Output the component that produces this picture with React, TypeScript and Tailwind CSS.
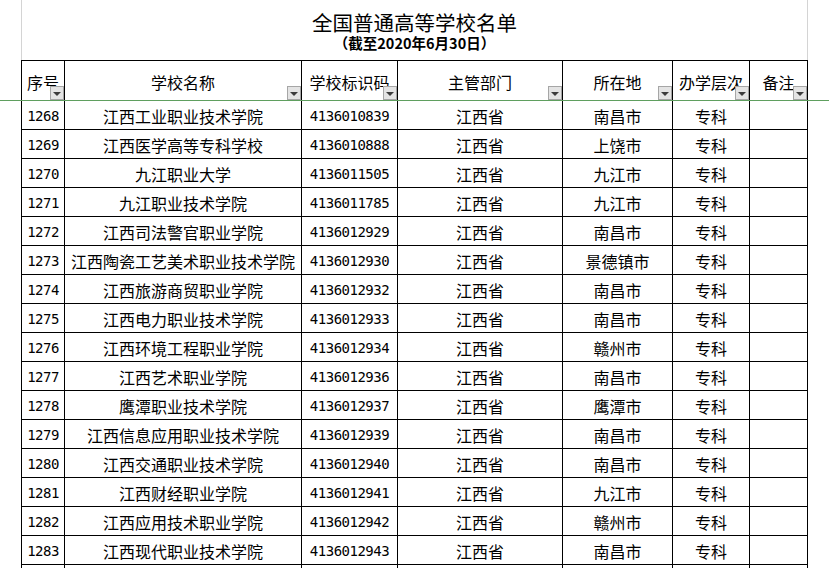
type Row = {
  no: string;
  name: string;
  code: string;
  dept: string;
  city: string;
  level: string;
};

const rows: Row[] = [
  { no: "1268", name: "江西工业职业技术学院", code: "4136010839", dept: "江西省", city: "南昌市", level: "专科" },
  { no: "1269", name: "江西医学高等专科学校", code: "4136010888", dept: "江西省", city: "上饶市", level: "专科" },
  { no: "1270", name: "九江职业大学", code: "4136011505", dept: "江西省", city: "九江市", level: "专科" },
  { no: "1271", name: "九江职业技术学院", code: "4136011785", dept: "江西省", city: "九江市", level: "专科" },
  { no: "1272", name: "江西司法警官职业学院", code: "4136012929", dept: "江西省", city: "南昌市", level: "专科" },
  { no: "1273", name: "江西陶瓷工艺美术职业技术学院", code: "4136012930", dept: "江西省", city: "景德镇市", level: "专科" },
  { no: "1274", name: "江西旅游商贸职业学院", code: "4136012932", dept: "江西省", city: "南昌市", level: "专科" },
  { no: "1275", name: "江西电力职业技术学院", code: "4136012933", dept: "江西省", city: "南昌市", level: "专科" },
  { no: "1276", name: "江西环境工程职业学院", code: "4136012934", dept: "江西省", city: "赣州市", level: "专科" },
  { no: "1277", name: "江西艺术职业学院", code: "4136012936", dept: "江西省", city: "南昌市", level: "专科" },
  { no: "1278", name: "鹰潭职业技术学院", code: "4136012937", dept: "江西省", city: "鹰潭市", level: "专科" },
  { no: "1279", name: "江西信息应用职业技术学院", code: "4136012939", dept: "江西省", city: "南昌市", level: "专科" },
  { no: "1280", name: "江西交通职业技术学院", code: "4136012940", dept: "江西省", city: "南昌市", level: "专科" },
  { no: "1281", name: "江西财经职业学院", code: "4136012941", dept: "江西省", city: "九江市", level: "专科" },
  { no: "1282", name: "江西应用技术职业学院", code: "4136012942", dept: "江西省", city: "赣州市", level: "专科" },
  { no: "1283", name: "江西现代职业技术学院", code: "4136012943", dept: "江西省", city: "南昌市", level: "专科" },
];

const headers = ["序号", "学校名称", "学校标识码", "主管部门", "所在地", "办学层次", "备注"];

const cjk = "font-['Noto_Sans_CJK_SC',sans-serif] text-[16px]";
const mono = "font-['DejaVu_Sans_Mono',monospace] text-[14px] tracking-[-0.5px]";

function FilterButton() {
  return (
    <span className="absolute right-0 bottom-0 flex h-[14px] w-[14px] items-center justify-center border border-[#a6a6a6] bg-[#e4e4e4]">
      <span className="mt-px h-0 w-0 border-x-[4px] border-t-[4px] border-x-transparent border-t-[#3c3c3c]" />
    </span>
  );
}

function Cell({ children, font = cjk }: { children?: React.ReactNode; font?: string }) {
  return (
    <div className={`flex items-center justify-center bg-white pt-[2px] leading-none whitespace-nowrap text-black ${font}`}>
      {children}
    </div>
  );
}

export default function App() {
  return (
    <div className="relative h-[568px] w-[829px] overflow-hidden bg-white font-['Noto_Sans_CJK_SC',sans-serif]">
      <div className="ml-[21px] flex h-[60px] w-[787px] flex-col items-center border-x border-[#d4d4d4] pt-[11px]">
        <div className="text-[20.5px] leading-[22px] text-black">全国普通高等学校名单</div>
        <div className="text-[14.5px] leading-[20px] font-bold text-black">（截至2020年6月30日）</div>
      </div>

      <div className="ml-[21px] grid w-[787px] grid-cols-[42px_236px_95px_164px_109px_76px_57px] grid-rows-[39px] auto-rows-[28px] gap-px bg-black p-px">
        {headers.map((h) => (
          <div key={h} className="relative flex items-center justify-center bg-white pt-[2px] text-[16px] leading-none whitespace-nowrap text-black">
            {h}
            <FilterButton />
          </div>
        ))}

        {rows.map((r) => (
          <div key={r.no} className="contents">
            <Cell font={mono}>{r.no}</Cell>
            <Cell>{r.name}</Cell>
            <Cell font={mono}>{r.code}</Cell>
            <Cell>{r.dept}</Cell>
            <Cell>{r.city}</Cell>
            <Cell>{r.level}</Cell>
            <Cell />
          </div>
        ))}

        {headers.map((h) => (
          <Cell key={"tail-" + h} />
        ))}
      </div>

      {/* freeze pane line */}
      <div className="absolute top-[100px] left-0 h-px w-full bg-[#5f9f5f]" />
    </div>
  );
}
